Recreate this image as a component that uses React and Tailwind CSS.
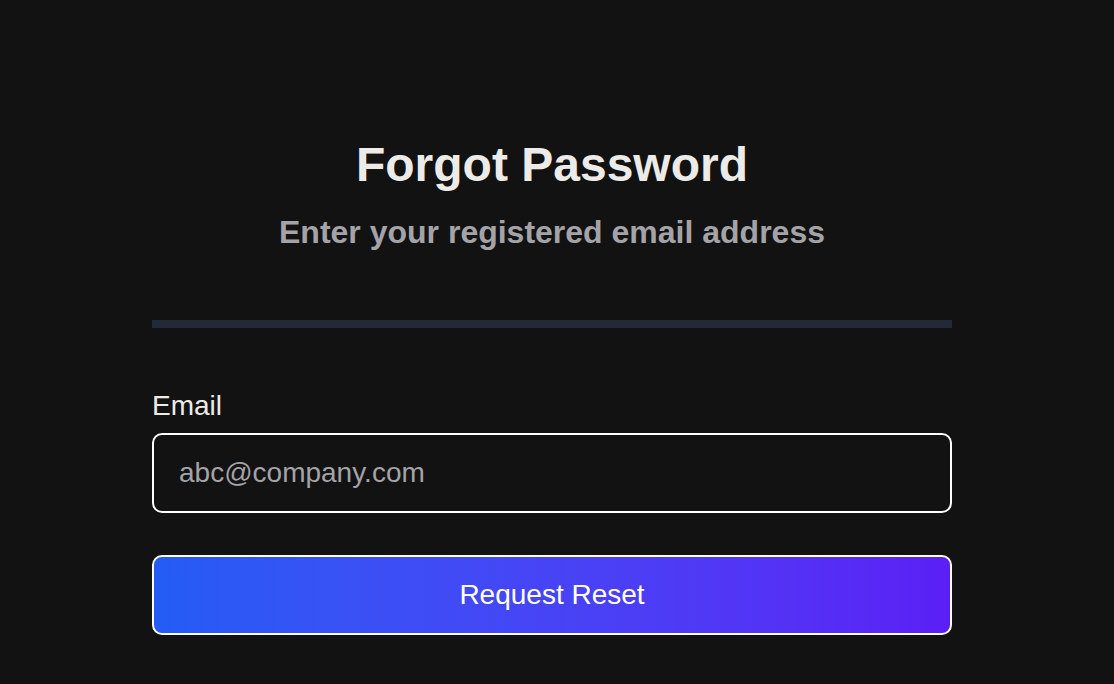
import React from 'react';

const App = () => {
    return (
        <div className="min-h-screen bg-[#121212] font-['Liberation_Sans',Arial,sans-serif] flex justify-center pr-[10px]">
            <div className="w-[800px] pt-[137px]">
                {/* Heading */}
                <div className="text-center">
                    <h1 className="text-[48px] leading-[56px] font-bold text-[#ecebe7]">Forgot Password</h1>
                    <p className="mt-[19px] text-[32px] leading-[40px] font-bold text-[#a3a3a8]">Enter your registered email address</p>
                </div>

                <div className="mt-[68px] h-[8px] bg-[#222a39]" />

                {/* Form */}
                <form className="mt-[62px]" onSubmit={(e) => e.preventDefault()}>
                    <label className="block text-[28px] leading-[32px] text-[#ecebe7]">Email</label>
                    <input
                        type="email"
                        placeholder="abc@company.com"
                        className="mt-[11px] w-full h-[80px] px-[25px] bg-transparent border-2 border-white rounded-[10px] text-[28px] text-white placeholder:text-[#a3a3a8] outline-none"
                    />
                    <button
                        type="submit"
                        className="mt-[42px] w-full h-[80px] rounded-[10px] border-2 border-white bg-gradient-to-r from-[#235cf5] to-[#5a1ff5] text-white text-[28px]"
                    >
                        Request Reset
                    </button>
                </form>
            </div>
        </div>
    );
};

export default App;
